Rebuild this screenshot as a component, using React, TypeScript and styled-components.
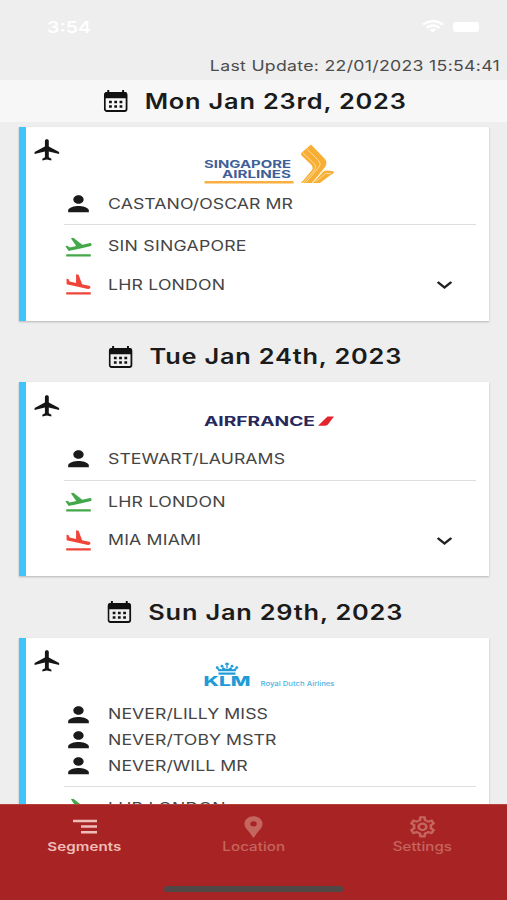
import React from "react";
import styled, { createGlobalStyle } from "styled-components";
import {
  MdFlight,
  MdFlightLand,
  MdFlightTakeoff,
  MdKeyboardArrowDown,
  MdLocationPin,
  MdOutlineSettings,
  MdPerson,
} from "react-icons/md";

const STRETCH = 1.219;

const GlobalStyle = createGlobalStyle`
  * { box-sizing: border-box; }
  body {
    margin: 0;
    background: #eeeeee;
    font-family: Inter, "Liberation Sans", sans-serif;
    overflow: hidden;
  }
`;

const Screen = styled.div`
  width: 507px;
  height: 900px;
  display: flex;
  flex-direction: column;
  overflow: hidden;
  background: #eeeeee;
`;

const StatusBar = styled.div`
  flex: none;
  height: 54px;
  padding: 0 28px 0 47px;
  display: flex;
  align-items: center;
  color: #fff;
`;

const Clock = styled.div`
  flex: 1;
  font-size: 16px;
  font-weight: 600;
  transform: scaleX(${STRETCH});
  transform-origin: left center;
`;

const WifiGlyph = styled.svg`
  width: 22px;
  height: 13px;
  margin-right: 9px;
  margin-top: -2px;
`;

const Battery = styled.div`
  width: 26px;
  height: 10px;
  border-radius: 3px;
  background: #fff;
`;

const LastUpdate = styled.div`
  flex: none;
  height: 26px;
  padding-right: 7px;
  text-align: right;
  line-height: 23px;
  font-size: 14.5px;
  letter-spacing: 0.25px;
  color: #4c4c4c;
  white-space: nowrap;

  span {
    display: inline-block;
    transform: scaleX(${STRETCH});
    transform-origin: right center;
  }
`;

const List = styled.main`
  flex: 1;
  min-height: 0;
  overflow: hidden;
`;

const DayHeader = styled.header<{ $pinned?: boolean }>`
  height: 42.2px;
  margin-bottom: 4.8px;
  display: flex;
  align-items: center;
  justify-content: center;
  background: ${(p) => (p.$pinned ? "#f7f7f7" : "transparent")};
`;

const DayTitle = styled.h2`
  margin: 0.6px 0 0 3.5px;
  display: flex;
  align-items: center;
  gap: 14px;
  transform: scaleX(${STRETCH});
  font-size: 20.8px;
  font-weight: 600;
  letter-spacing: 0.66px;
  line-height: 43px;
  color: #1b1b1b;
  white-space: nowrap;
`;

const CalendarSvg = styled.svg`
  width: 19.5px;
  height: 22px;
  color: #111;
`;

const Card = styled.article`
  width: 470px;
  margin: 0 0 14.6px 19px;
  padding-bottom: 16.5px;
  border-left: 7px solid #41c3fb;
  background: #fff;
  box-shadow: 0 1px 2px rgba(0, 0, 0, 0.24);
`;

const CardTop = styled.div`
  height: 64px;
  padding: 10.5px 0 0 6px;
  display: flex;
  align-items: flex-start;
`;

const Icon = styled.span<{ $color: string }>`
  flex: none;
  width: 31px;
  height: 25.6px;
  display: block;
  color: ${(p) => p.$color};

  svg {
    display: block;
    width: 100%;
    height: 100%;
  }
`;

const Logo = styled.svg`
  width: 134px;
  height: 44px;
  margin: 6px 0 0 140px;
  font-family: Inter, "Liberation Sans", sans-serif;
`;

const Passenger = styled.div`
  height: 25.6px;
  padding-left: 37.1px;
  display: flex;
  align-items: center;
  gap: 13.9px;
`;

const Divider = styled.hr`
  height: 1px;
  margin: 7.6px 13px 1.9px 38px;
  border: 0;
  background: #dedede;
`;

const Leg = styled.div`
  height: 38.6px;
  padding: 0 29px 0 37.1px;
  display: flex;
  align-items: center;
  gap: 13.9px;
`;

const Label = styled.span<{ $spacing?: number }>`
  flex: 1;
  font-size: 14.5px;
  letter-spacing: ${(p) => p.$spacing ?? 0.05}px;
  line-height: 20px;
  color: #454545;
  white-space: nowrap;
  transform: scaleX(${STRETCH});
  transform-origin: left center;
`;

const TabBar = styled.nav`
  flex: none;
  height: 96px;
  border-top: 1px solid #b8403a;
  background: #a82424;
  display: flex;
  flex-direction: column;
  align-items: center;
`;

const Tabs = styled.div`
  width: 100%;
  height: 81px;
  display: flex;
`;

const Tab = styled.div<{ $active?: boolean }>`
  flex: 1;
  padding-top: 9px;
  display: flex;
  flex-direction: column;
  align-items: center;
  color: ${(p) => (p.$active ? "#efbdb8" : "#c5655f")};
`;

const TabLabel = styled.span<{ $active?: boolean }>`
  font-size: 12.4px;
  line-height: 14px;
  font-weight: ${(p) => (p.$active ? 600 : 500)};
  letter-spacing: 0.05px;
  transform: scaleX(${STRETCH});
`;

const HomeIndicator = styled.div`
  width: 179px;
  height: 6px;
  border-radius: 3px;
  background: #504747;
`;

function CalendarIcon() {
  return (
    <CalendarSvg viewBox="0 0 24 22" preserveAspectRatio="none">
      <path d="M4.500 0v4M19.500 0v4" stroke="currentColor" strokeWidth="2" />
      <rect x="1" y="3" width="22" height="18" rx="2" fill="none" stroke="currentColor" strokeWidth="1.800" />
      <path d="M0.500 8.300V4q0-2 2.500-2h18q2.500 0 2.500 2v4.300z" fill="currentColor" />
      <path
        d="M5.300 12h2.800M10.600 12h2.800M15.900 12h2.800M5.300 16.500h2.800M10.600 16.500h2.800M15.900 16.500h2.800"
        stroke="currentColor"
        strokeWidth="2.300"
      />
    </CalendarSvg>
  );
}

function SegmentsIcon() {
  return (
    <svg viewBox="0 0 31 25.6" preserveAspectRatio="none">
      <path d="M4 6.900h24M12 12.600h16M12 18.300h16" stroke="currentColor" strokeWidth="2.500" />
    </svg>
  );
}

function SingaporeLogo() {
  return (
    <Logo viewBox="0 0 134 44">
      <g fill="#3f5f98" fontSize="10.6" fontWeight="700">
        <text x="1" y="24.600" textLength="87" lengthAdjust="spacingAndGlyphs">SINGAPORE</text>
        <text x="19" y="35.400" textLength="69" lengthAdjust="spacingAndGlyphs">AIRLINES</text>
      </g>
      <path d="M1.500 39.200h89" stroke="#f7b041" strokeWidth="2.400" />
      <g fill="#f8ae33">
        <path d="M108 1.500L121.500 15.500Q125 19.500 122 24L109 40H98L109 27Q110.500 25 108.500 22L98.500 12.500Q97 10 100 8.500Z" />
        <path d="M110 40L120 29Q122 27 125 27.500L131 28.500Q131 30.500 127.500 32L117 40Z" />
      </g>
      <g fill="none" stroke="#fde3b0" strokeWidth="0.800">
        <path d="M103.500 5.500L116 18Q118.500 21 116 24L102.500 40" />
        <path d="M99.500 9.500L111.500 21Q114 24 111.500 27L100 40" />
        <path d="M109 40L120 27.500Q122 26 125 27.500" />
        <path d="M113 38.500L122.500 30.500H128" />
      </g>
    </Logo>
  );
}

function AirFranceLogo() {
  return (
    <Logo viewBox="0 0 134 44">
      <text x="1" y="26.600" fontSize="12.600" fontWeight="700" fill="#27285c" textLength="111" lengthAdjust="spacingAndGlyphs">
        AIRFRANCE
      </text>
      <path d="M115 26.700L124.500 17.400H131L125.500 24.800Q124.300 26.700 122 26.700Z" fill="#e3242c" />
    </Logo>
  );
}

function KlmLogo() {
  return (
    <Logo viewBox="0 0 134 44">
      <g fill="#1f9bd7">
        <text x="0.500" y="32.300" fontSize="13.400" fontWeight="800" textLength="47" lengthAdjust="spacingAndGlyphs">KLM</text>
        <rect x="15.500" y="18.500" width="17" height="2.200" />
        <path d="M15.500 17.200L13.500 13.600L18.500 15.600L20 13.100L23 15.100H25L28 13.100L29.500 15.600L34.500 13.600L32.500 17.200Z" />
        <circle cx="14.200" cy="13.600" r="1.400" />
        <circle cx="19" cy="12.200" r="1.400" />
        <circle cx="29" cy="12.200" r="1.400" />
        <circle cx="33.800" cy="13.600" r="1.400" />
        <path d="M22 10h4M24 8.600v6" stroke="#1f9bd7" strokeWidth="1.400" />
      </g>
      <text x="57.500" y="32.100" fontSize="6.800" fontWeight="500" fill="#4db3e2" textLength="74" lengthAdjust="spacingAndGlyphs">
        Royal Dutch Airlines
      </text>
    </Logo>
  );
}

interface Segment {
  date: string;
  logo: React.ReactNode;
  passengers: string[];
  from: string;
  to?: string;
}

const segments: Segment[] = [
  {
    date: "Mon Jan 23rd, 2023",
    logo: <SingaporeLogo />,
    passengers: ["CASTANO/OSCAR MR"],
    from: "SIN SINGAPORE",
    to: "LHR LONDON",
  },
  {
    date: "Tue Jan 24th, 2023",
    logo: <AirFranceLogo />,
    passengers: ["STEWART/LAURAMS"],
    from: "LHR LONDON",
    to: "MIA MIAMI",
  },
  {
    date: "Sun Jan 29th, 2023",
    logo: <KlmLogo />,
    passengers: ["NEVER/LILLY MISS", "NEVER/TOBY MSTR", "NEVER/WILL MR"],
    from: "LHR LONDON",
  },
];

function SegmentCard({ segment }: { segment: Segment }) {
  return (
    <Card>
      <CardTop>
        <Icon $color="#151515"><MdFlight preserveAspectRatio="none" /></Icon>
        {segment.logo}
      </CardTop>
      {segment.passengers.map((name) => (
        <Passenger key={name}>
          <Icon $color="#1a1a1a"><MdPerson preserveAspectRatio="none" /></Icon>
          <Label>{name}</Label>
        </Passenger>
      ))}
      <Divider />
      <Leg>
        <Icon $color="#43a84a"><MdFlightTakeoff preserveAspectRatio="none" /></Icon>
        <Label $spacing={0.2}>{segment.from}</Label>
      </Leg>
      {segment.to && (
        <Leg>
          <Icon $color="#f04438"><MdFlightLand preserveAspectRatio="none" /></Icon>
          <Label $spacing={0.15}>{segment.to}</Label>
          <Icon $color="#222"><MdKeyboardArrowDown preserveAspectRatio="none" /></Icon>
        </Leg>
      )}
    </Card>
  );
}

export default function App() {
  return (
    <Screen>
      <GlobalStyle />
      <StatusBar>
        <Clock>3:54</Clock>
        <WifiGlyph viewBox="0 0 22 13" fill="none" stroke="#fff" strokeWidth="2.400">
          <path d="M1 4.600Q11-2.400 21 4.600M4.600 7.700Q11 3.300 17.400 7.700" />
          <path d="M7.800 9.700Q11 7.500 14.200 9.700L11 12.600Z" fill="#fff" stroke="none" />
        </WifiGlyph>
        <Battery />
      </StatusBar>
      <LastUpdate><span>Last Update: 22/01/2023 15:54:41</span></LastUpdate>
      <List>
        {segments.map((segment, index) => (
          <section key={segment.date}>
            <DayHeader $pinned={index === 0}>
              <DayTitle>
                <CalendarIcon />
                {segment.date}
              </DayTitle>
            </DayHeader>
            <SegmentCard segment={segment} />
          </section>
        ))}
      </List>
      <TabBar>
        <Tabs>
          <Tab $active>
            <Icon $color="inherit"><SegmentsIcon /></Icon>
            <TabLabel $active>Segments</TabLabel>
          </Tab>
          <Tab>
            <Icon $color="inherit"><MdLocationPin preserveAspectRatio="none" /></Icon>
            <TabLabel>Location</TabLabel>
          </Tab>
          <Tab>
            <Icon $color="inherit"><MdOutlineSettings preserveAspectRatio="none" /></Icon>
            <TabLabel>Settings</TabLabel>
          </Tab>
        </Tabs>
        <HomeIndicator />
      </TabBar>
    </Screen>
  );
}
